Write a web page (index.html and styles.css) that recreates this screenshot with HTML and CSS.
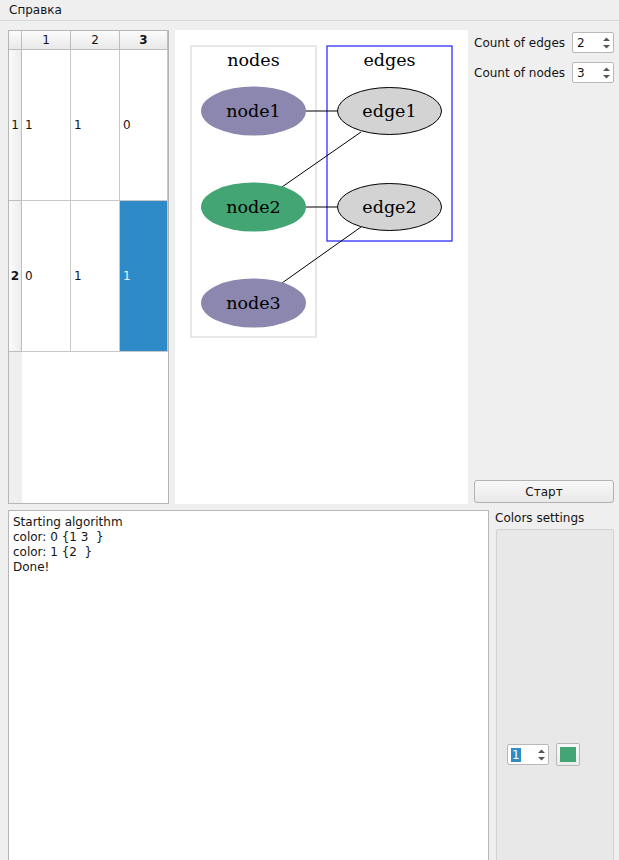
FILE: index.html
```html
<!DOCTYPE html>
<html>
<head>
<meta charset="utf-8">
<link rel="stylesheet" href="styles.css">
</head>
<body>
<div class="menubar"><span class="menu-item">Справка</span></div>
<div class="top">
  <div class="table">
    <div class="grid">
      <div class="corner"></div>
      <div class="hh">1</div>
      <div class="hh">2</div>
      <div class="hh cur">3</div>
      <div class="rh">1</div>
      <div class="cell">1</div>
      <div class="cell">1</div>
      <div class="cell">0</div>
      <div class="rh cur">2</div>
      <div class="cell">0</div>
      <div class="cell">1</div>
      <div class="cell sel">1</div>
    </div>
    <div class="rest"><div class="rest-rh"></div></div>
  </div>
  <div class="graph">
    <svg width="293" height="474" viewBox="175 30 293 474">
      <rect x="191" y="46" width="125" height="291" fill="none" stroke="#dcdcdc" stroke-width="1.3"/>
      <rect x="327" y="46" width="125" height="195" fill="none" stroke="#2f2fff" stroke-width="1.3"/>
      <text x="253.5" y="66" class="gt">nodes</text>
      <text x="389.5" y="66" class="gt">edges</text>
      <line x1="306" y1="111" x2="337" y2="111" stroke="#000" stroke-width="1"/>
      <line x1="282" y1="187" x2="361" y2="132" stroke="#000" stroke-width="1"/>
      <line x1="306" y1="207" x2="337" y2="207" stroke="#000" stroke-width="1"/>
      <line x1="282" y1="283" x2="361" y2="227" stroke="#000" stroke-width="1"/>
      <ellipse cx="253.5" cy="111" rx="52.5" ry="24.5" fill="#8b87ae"/>
      <ellipse cx="253.5" cy="207" rx="52.5" ry="24.5" fill="#42a573"/>
      <ellipse cx="253.5" cy="303" rx="52.5" ry="24.5" fill="#8b87ae"/>
      <ellipse cx="389.5" cy="111" rx="52" ry="23.5" fill="#d3d3d3" stroke="#000" stroke-width="1"/>
      <ellipse cx="389.5" cy="207" rx="52" ry="23.5" fill="#d3d3d3" stroke="#000" stroke-width="1"/>
      <text x="253.5" y="117" class="gt">node1</text>
      <text x="253.5" y="213" class="gt">node2</text>
      <text x="253.5" y="309" class="gt">node3</text>
      <text x="389.5" y="117" class="gt">edge1</text>
      <text x="389.5" y="213" class="gt">edge2</text>
    </svg>
  </div>
  <div class="side">
    <div class="field">
      <span class="label">Count of edges</span>
      <div class="spin"><span class="val">2</span><span class="arrows"><svg width="9" height="14" viewBox="0 0 9 14"><path d="M1 5 L4.5 1.5 L8 5 Z" fill="#555"/><path d="M1 9 L4.5 12.5 L8 9 Z" fill="#555"/></svg></span></div>
    </div>
    <div class="field">
      <span class="label">Count of nodes</span>
      <div class="spin"><span class="val">3</span><span class="arrows"><svg width="9" height="14" viewBox="0 0 9 14"><path d="M1 5 L4.5 1.5 L8 5 Z" fill="#555"/><path d="M1 9 L4.5 12.5 L8 9 Z" fill="#555"/></svg></span></div>
    </div>
    <div class="spacer"></div>
    <button class="btn">Старт</button>
  </div>
</div>
<div class="bottom">
  <div class="log">
    <div>Starting algorithm</div>
    <div>color: 0 {1 3&nbsp; }</div>
    <div>color: 1 {2&nbsp; }</div>
    <div>Done!</div>
  </div>
  <div class="colors">
    <div class="clabel">Colors settings</div>
    <div class="cframe">
      <div class="crow">
        <div class="spin small"><span class="val"><span class="hl">1</span></span><span class="arrows"><svg width="9" height="14" viewBox="0 0 9 14"><path d="M1 5 L4.5 1.5 L8 5 Z" fill="#555"/><path d="M1 9 L4.5 12.5 L8 9 Z" fill="#555"/></svg></span></div>
        <div class="colorbtn"><div class="swatch"></div></div>
      </div>
    </div>
  </div>
</div>
</body>
</html>
```

FILE: styles.css
```css
html, body {
  margin: 0;
  padding: 0;
  background: #efefef;
  overflow: hidden;
  height: 860px;
}
body {
  font-family: "DejaVu Sans", sans-serif;
  font-size: 12px;
  color: #141414;
}
.menubar {
  height: 20px;
  border-bottom: 1px solid #d6d6d6;
  display: flex;
  align-items: center;
  padding-left: 9px;
}
.top {
  display: flex;
  margin-top: 9px;
  padding-left: 8px;
  gap: 6px;
  height: 474px;
}
.table {
  width: 159px;
  height: 472px;
  border: 1px solid #b6b6b6;
  background: #fff;
  display: flex;
  flex-direction: column;
}
.grid {
  display: grid;
  grid-template-columns: 13px 49px 49px 48px;
  grid-template-rows: 19px 151px 151px;
}
.grid > div {
  border-right: 1px solid #c8c8c8;
  border-bottom: 1px solid #c8c8c8;
}
.corner {
  background: linear-gradient(#fbfbfb, #e9e9e9);
  border-color: #bdbdbd !important;
}
.hh {
  background: linear-gradient(#fbfbfb, #e9e9e9);
  border-color: #bdbdbd !important;
  text-align: center;
  line-height: 18px;
}
.hh.cur, .rh.cur { font-weight: bold; }
.rh {
  background: linear-gradient(90deg, #fbfbfb, #ececec);
  border-color: #bdbdbd !important;
  display: flex;
  align-items: center;
  justify-content: center;
}
.cell {
  display: flex;
  align-items: center;
  padding-left: 3px;
}
.cell.sel {
  background: #2f8bc8;
  color: #e8f2fa;
}
.rest {
  flex: 1;
  display: flex;
}
.rest-rh {
  width: 13px;
  background: #efefef;
}
.graph {
  width: 293px;
  height: 474px;
  background: #fff;
}
.graph svg { display: block; }
.gt {
  font-family: "DejaVu Serif", serif;
  font-size: 17.5px;
  text-anchor: middle;
  fill: #000;
}
.side {
  width: 140px;
  display: flex;
  flex-direction: column;
}
.field {
  display: flex;
  align-items: center;
  justify-content: space-between;
  height: 21px;
  margin-top: 2px;
  margin-bottom: 7px;
}
.spin {
  width: 40px;
  height: 19px;
  border: 1px solid #b8b8b8;
  border-radius: 2px;
  background: #fff;
  display: flex;
  align-items: center;
  justify-content: space-between;
}
.spin .val { padding-left: 4px; }
.spin .arrows {
  display: flex;
  align-items: center;
  padding-right: 2px;
}
.spin .arrows svg { display: block; }
.spacer { flex: 1; }
.btn {
  height: 23px;
  margin-bottom: 1px;
  border: 1px solid #b2b2b2;
  border-radius: 3px;
  background: linear-gradient(#f8f8f8, #e9e9e9);
  font-family: "DejaVu Sans", sans-serif;
  font-size: 12px;
  color: #141414;
  padding: 0;
}
.bottom {
  display: flex;
  margin-top: 6px;
  padding-left: 8px;
  gap: 6px;
}
.log {
  width: 475px;
  height: 360px;
  border: 1px solid #b6b6b6;
  background: #fff;
  padding: 4px 0 0 4px;
  line-height: 15px;
}
.colors {
  width: 119px;
  display: flex;
  flex-direction: column;
}
.clabel {
  height: 19px;
  line-height: 16px;
}
.cframe {
  margin-left: 1px;
  height: 340px;
  background: #e8e8e8;
  border: 1px solid #d2d2d2;
  border-radius: 2px;
  padding: 213px 0 0 10px;
}
.crow {
  display: flex;
  align-items: center;
  gap: 7px;
}
.spin.small .val { padding-left: 3px; }
.hl {
  background: #308cc6;
  color: #fff;
  padding: 0 1px;
}
.colorbtn {
  width: 22px;
  height: 21px;
  border: 1px solid #b8b8b8;
  border-radius: 2px;
  background: linear-gradient(#f8f8f8, #ececec);
  display: flex;
  align-items: center;
  justify-content: center;
}
.swatch {
  width: 16px;
  height: 15px;
  background: #42a573;
}
```
